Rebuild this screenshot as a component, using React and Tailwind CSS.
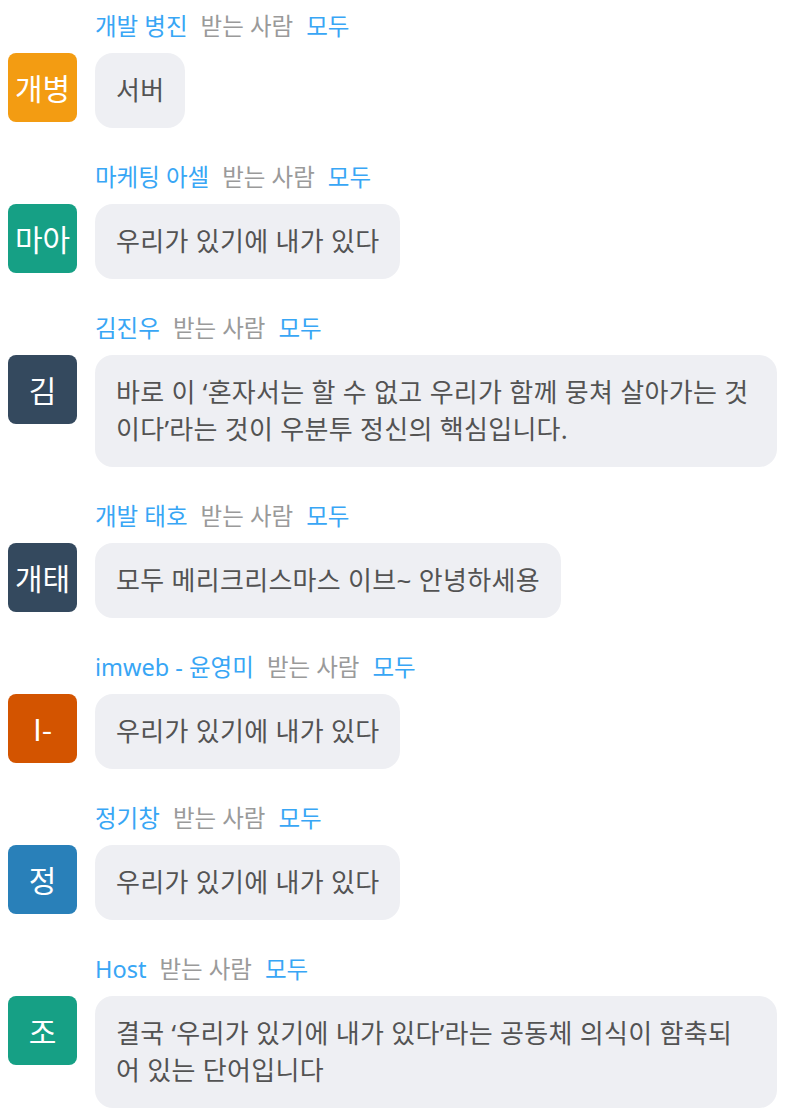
import React from "react";

const messages = [
  { name: "개발 병진", avatar: "개병", color: "bg-[#f39c12]", text: "서버" },
  { name: "마케팅 아셀", avatar: "마아", color: "bg-[#16a085]", text: "우리가 있기에 내가 있다" },
  {
    name: "김진우",
    avatar: "김",
    color: "bg-[#34495e]",
    text: "바로 이 ‘혼자서는 할 수 없고 우리가 함께 뭉쳐 살아가는 것이다’라는 것이 우분투 정신의 핵심입니다.",
  },
  { name: "개발 태호", avatar: "개태", color: "bg-[#34495e]", text: "모두 메리크리스마스 이브~ 안녕하세용" },
  { name: "imweb - 윤영미", avatar: "I-", color: "bg-[#d35400]", text: "우리가 있기에 내가 있다" },
  { name: "정기창", avatar: "정", color: "bg-[#2980b9]", text: "우리가 있기에 내가 있다" },
  {
    name: "Host",
    avatar: "조",
    color: "bg-[#16a085]",
    text: "결국 ‘우리가 있기에 내가 있다’라는 공동체 의식이 함축되어 있는 단어입니다",
  },
];

function Message({ name, avatar, color, text }) {
  return (
    <div className="mb-[34px]">
      <div className="flex items-center gap-[13px] pl-[95px] mb-[12px] text-[23.5px] leading-[30px]">
        <span className="text-[#38a6f5]">{name}</span>
        <span className="text-[#9a9a9a]">받는 사람</span>
        <span className="text-[#38a6f5]">모두</span>
      </div>
      <div className="flex items-start gap-[18px] pl-[8px]">
        <div
          className={`${color} w-[69px] h-[69px] shrink-0 rounded-[8px] flex items-center justify-center text-white text-[30px]`}
          style={{ fontFamily: '"Noto Sans CJK KR", sans-serif' }}
        >
          {avatar}
        </div>
        <div className="max-w-[682px] bg-[#eeeff3] rounded-[18px] px-[21px] py-[19px] text-[26px] tracking-[0.3px] leading-[37px] text-[#535353]">
          {text}
        </div>
      </div>
    </div>
  );
}

export default function App() {
  return (
    <div
      className="w-[800px] h-[1116px] overflow-hidden bg-white pt-[11px]"
      style={{ fontFamily: '"Noto Sans", "Noto Sans CJK KR", sans-serif' }}
    >
      {messages.map((m, i) => (
        <Message key={i} {...m} />
      ))}
    </div>
  );
}
